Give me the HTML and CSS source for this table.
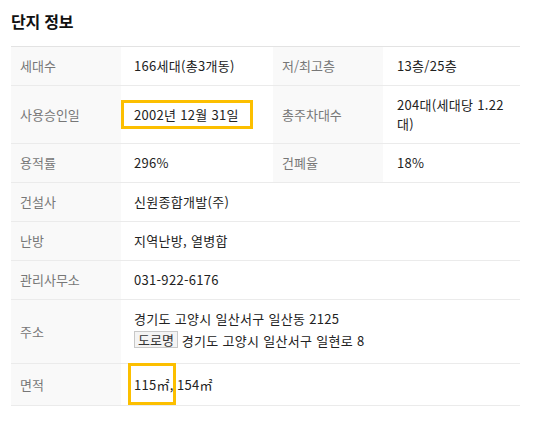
FILE: index.html
```html
<!DOCTYPE html>
<html lang="ko">
<head>
<meta charset="utf-8">
<link rel="stylesheet" href="styles.css">
</head>
<body>
<section class="info">
  <h2 class="title">단지 정보</h2>
  <table class="grid">
    <colgroup>
      <col class="c1"><col class="c2"><col class="c3"><col class="c4">
    </colgroup>
    <tr>
      <th>세대수</th><td>166세대(총3개동)</td>
      <th>저/최고층</th><td class="v4">13층/25층</td>
    </tr>
    <tr class="tall">
      <th>사용승인일</th><td><span class="mark mark-date">2002년 12월 31일</span></td>
      <th>총주차대수</th><td class="v4">204대(세대당 1.22 대)</td>
    </tr>
    <tr>
      <th>용적률</th><td>296%</td>
      <th>건폐율</th><td class="v4">18%</td>
    </tr>
    <tr>
      <th>건설사</th><td colspan="3">신원종합개발(주)</td>
    </tr>
    <tr>
      <th>난방</th><td colspan="3">지역난방, 열병합</td>
    </tr>
    <tr>
      <th>관리사무소</th><td colspan="3">031-922-6176</td>
    </tr>
    <tr>
      <th>주소</th>
      <td colspan="3">
        <div>경기도 고양시 일산서구 일산동 2125</div>
        <div class="road"><span class="badge">도로명</span> 경기도 고양시 일산서구 일현로 8</div>
      </td>
    </tr>
    <tr class="last">
      <th>면적</th><td colspan="3"><span class="mark mark-area">115㎡</span>, 154㎡</td>
    </tr>
  </table>
</section>
</body>
</html>
```

FILE: styles.css
```css
html, body {
  margin: 0;
  padding: 0;
  background: #ffffff;
}

body {
  font-family: "Noto Sans CJK KR", "Noto Sans", sans-serif;
  color: #222222;
}

.info {
  width: 509px;
  margin-left: 11px;
  padding-top: 9px;
}

.title {
  margin: 0 0 13px 0;
  font-size: 16px;
  line-height: 24px;
  font-weight: 700;
  color: #111111;
  letter-spacing: -0.2px;
}

.grid {
  width: 509px;
  border-collapse: collapse;
  table-layout: fixed;
  font-size: 13px;
  line-height: 19px;
  border-top: 1px solid #e3e3e3;
}

.c1, .c3 { width: 110px; }
.c2 { width: 152px; }
.c4 { width: 137px; }

.grid th,
.grid td {
  border-bottom: 1px solid #ebebeb;
  padding: 9px 0 10px;
  vertical-align: middle;
  text-align: left;
}

.grid th {
  background: #f9f9f9;
  color: #777777;
  font-weight: 400;
  padding-left: 9px;
}

.grid td {
  color: #222222;
  padding-left: 13px;
  padding-right: 8px;
  letter-spacing: 0.3px;
}

.grid td.v4 {
  padding-left: 14px;
}

.grid tr.last th,
.grid tr.last td {
  padding-top: 11px;
  padding-bottom: 11px;
}

.road {
  margin-top: 3px;
  margin-bottom: 3px;
}

.badge {
  display: inline-block;
  box-sizing: border-box;
  height: 17px;
  line-height: 15px;
  padding: 0 3px;
  border: 1px solid #c8c8c8;
  background: #f4f4f4;
  color: #333333;
  vertical-align: 1px;
  letter-spacing: 0;
}

.mark {
  position: relative;
}

.mark::after {
  content: "";
  position: absolute;
  box-sizing: border-box;
  border: 3px solid #fcbf00;
  pointer-events: none;
}

.mark-date::after {
  left: -13px;
  width: 132px;
  top: -5px;
  bottom: -5px;
}

.mark-area::after {
  left: -6px;
  width: 48px;
  top: -12px;
  bottom: -11px;
}
```
